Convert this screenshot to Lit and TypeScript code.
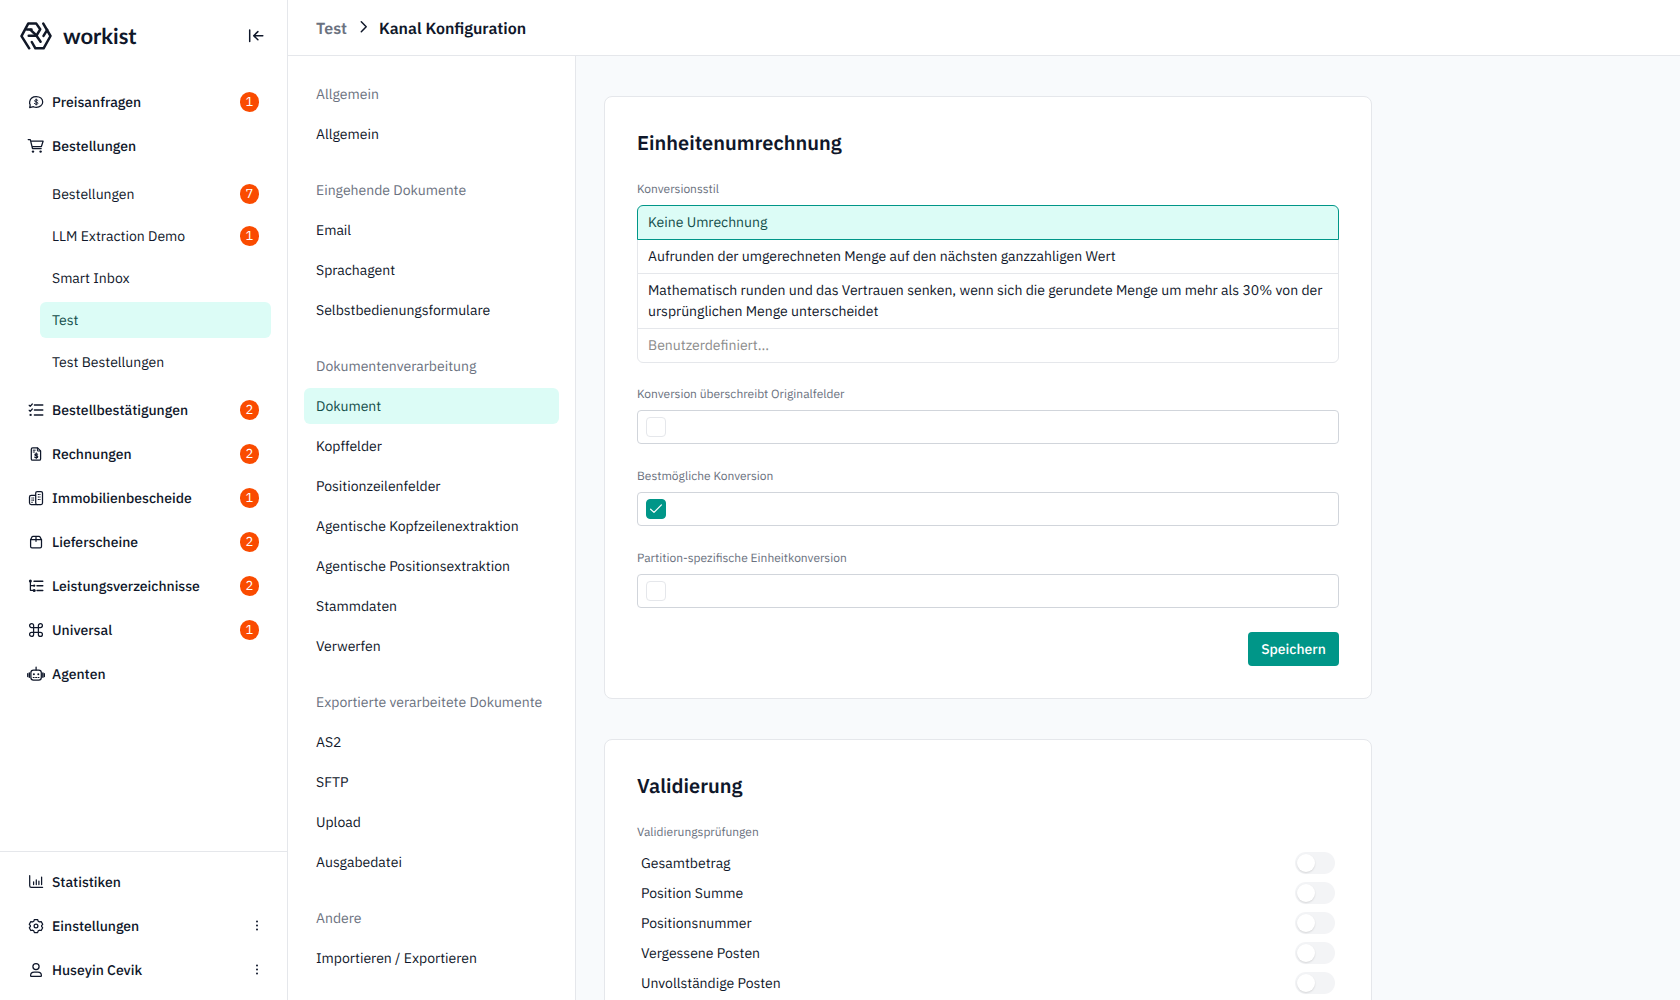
import { LitElement, html, css, svg, nothing } from "lit";
import { customElement, property, state } from "lit/decorators.js";
import { classMap } from "lit/directives/class-map.js";

/* ---------- icons (18 x 18 grid) ---------- */

const iconShapes = {
  quote: svg`
    <path d="M2.700 14.600 3.200 11.900A5.600 5 0 0 1 2.700 8.600C3.200 5.400 5.800 3.500 9.200 3.500c3.700 0 6.500 2.200 6.500 5.400s-2.800 5.400-6.300 5.400c-1 0-2-.2-2.900-.6z"/>
    <path d="M10.900 7.500c-.4-.5-1-.7-1.700-.7-.9 0-1.600.4-1.600 1.100 0 1.500 3.400.7 3.400 2.300 0 .7-.8 1.100-1.700 1.100-.8 0-1.500-.3-1.900-.8M9.200 6v6" stroke-width="1"/>`,
  cart: svg`
    <path d="M1.200 2.600h2.100l2.200 8.900h8.700M3.700 4.200h12.400l-1.700 5.300H5"/>
    <circle class="solid" cx="6" cy="14.600" r="1.200"/><circle class="solid" cx="13.600" cy="14.600" r="1.200"/>`,
  checks: svg`
    <path d="M7.400 4h8.400M7.400 9h8.400M7.400 14h8.400" stroke-width="1.400"/>
    <path d="m2.200 4.300 1 1L5.300 3M2.200 9.300l1 1L5.300 8"/>
    <rect class="solid" x="2.600" y="12.900" width="2" height="2"/>`,
  invoice: svg`
    <path d="M5.600 2.900h5l3 3v8c0 .8-.5 1.300-1.300 1.300H5.600c-.8 0-1.300-.5-1.300-1.300V4.200c0-.8.5-1.300 1.300-1.300z"/>
    <path d="M10.400 3v3h3M6.200 5.200h2M6.200 7h1.300" stroke-width="1"/>
    <path d="M10.700 9.200c-.4-.3-.9-.5-1.500-.5-.8 0-1.400.4-1.400 1 0 1.300 3 .6 3 2 0 .6-.7 1-1.500 1-.7 0-1.300-.2-1.700-.6M9.200 7.800v5.800" stroke-width="1.100"/>`,
  buildings: svg`
    <rect x="8.700" y="2.500" width="6.800" height="13" rx="1.500"/>
    <path d="M8.500 6.300H4.200c-1 0-1.700.7-1.700 1.700v5.700c0 1 .7 1.800 1.700 1.800h6"/>
    <path d="M11.400 5.500h.01M12.900 5.500h.01M11.400 8h.01M12.900 8h.01M11.400 10.500h.01M12.900 10.500h.01M5 9h.01M6.500 9h.01M5 11.200h.01M6.500 11.200h.01M5 13.300h.01" stroke-width="1.200" stroke-linecap="square"/>`,
  parcel: svg`
    <path d="M3.600 6.700h10.900v6.800c0 .8-.6 1.400-1.400 1.400H5c-.8 0-1.400-.6-1.400-1.400z"/>
    <path d="M3.600 6.700 5 3.900c.2-.4.600-.6 1-.6h6c.5 0 .8.200 1 .6l1.500 2.800M9 3.300v5"/>`,
  tree: svg`
    <path d="M3.400 4v9.300h4.200M3.400 8.600h4.200"/>
    <path d="M7 4.200h8.800M10 8.800h5.800M10 13.500h5.800" stroke-width="1.400"/>
    <circle class="solid" cx="3.400" cy="3.900" r="1.500"/><circle class="solid" cx="7.200" cy="8.700" r="1.100"/><circle class="solid" cx="7.200" cy="13.400" r="1.500"/>`,
  command: svg`
    <path d="M6.600 6.600h4.800v4.800H6.600zM6.600 6.600H4.600a2 2 0 1 1 2-2zM11.400 6.600v-2a2 2 0 1 1 2 2zM11.400 11.400h2a2 2 0 1 1-2 2zM6.600 11.400v2a2 2 0 1 1-2-2z"/>`,
  robot: svg`
    <rect x="3.900" y="5" width="10.400" height="10.200" rx="2.600"/>
    <path d="M9.100 2v3M.7 8.700v2.800M17.400 8.700v2.800"/>
    <path d="M2.300 8v4.200M15.900 8v4.200" stroke-width="1.500"/>
    <circle class="solid" cx="6.900" cy="9.300" r="1"/><circle class="solid" cx="11.300" cy="9.300" r="1"/>
    <path d="M6.200 12.500h1M8.600 12.500h1M11 12.500h1" stroke-width="1"/>`,
  chart: svg`
    <path d="M2.700 2.700v10c0 1 .7 1.600 1.600 1.600h11.300M6.600 8.800v2.700M9.300 6.800v4.700M11.900 8v3.500M14.600 4v7.500"/>`,
  gear: svg`
    <path d="M7.400 2.500h3.200l.6 1.700 1.200.7 1.800-.3 1.500 2.700-1.100 1.400v.7l1.100 1.400-1.500 2.700-1.800-.3-1.200.7-.6 1.700H7.400l-.6-1.700-1.200-.7-1.800.3-1.500-2.700 1.100-1.400v-.7L2.300 7.300l1.500-2.700 1.800.3 1.200-.7z"/>
    <circle cx="9" cy="9" r="1.900"/>`,
  user: svg`
    <circle cx="9" cy="5.600" r="3.100"/>
    <path d="M3.600 14.700c0-2.200 1.600-3.500 3.600-3.500h3.600c2 0 3.600 1.300 3.600 3.500 0 .4-.2.600-.6.600H4.200c-.4 0-.6-.2-.6-.6z"/>`,
  collapse: svg`<path d="M2.700 3v11.400M15.800 8.700H7M10.900 4.600 6.700 8.700l4.200 4.100" stroke-width="1.500"/>`,
  chevron: svg`<path d="m6.300 3.700 4.900 5-4.900 5" stroke-width="1.500"/>`,
  more: svg`
    <circle class="solid" cx="9" cy="4.400" r="1"/><circle class="solid" cx="9" cy="8.500" r="1"/><circle class="solid" cx="9" cy="12.600" r="1"/>`,
};

type IconName = keyof typeof iconShapes;

@customElement("ui-icon")
export class UiIcon extends LitElement {
  static styles = css`
    :host { display: block; flex: none; width: 18px; height: 18px; }
    svg { display: block; fill: none; stroke: currentColor; stroke-width: 1.25; stroke-linecap: round; stroke-linejoin: round; }
    .solid { fill: currentColor; stroke: none; }
  `;
  @property() name: IconName = "user";
  render() {
    return html`<svg width="18" height="18" viewBox="0 0 18 18">${iconShapes[this.name]}</svg>`;
  }
}

/* ---------- sidebar ---------- */

interface NavEntry {
  label: string;
  icon: IconName;
  count?: number;
  menu?: boolean;
  children?: { label: string; count?: number; active?: boolean }[];
}

const mainNav: NavEntry[] = [
  { label: "Preisanfragen", icon: "quote", count: 1 },
  {
    label: "Bestellungen",
    icon: "cart",
    children: [
      { label: "Bestellungen", count: 7 },
      { label: "LLM Extraction Demo", count: 1 },
      { label: "Smart Inbox" },
      { label: "Test", active: true },
      { label: "Test Bestellungen" },
    ],
  },
  { label: "Bestellbestätigungen", icon: "checks", count: 2 },
  { label: "Rechnungen", icon: "invoice", count: 2 },
  { label: "Immobilienbescheide", icon: "buildings", count: 1 },
  { label: "Lieferscheine", icon: "parcel", count: 2 },
  { label: "Leistungsverzeichnisse", icon: "tree", count: 2 },
  { label: "Universal", icon: "command", count: 1 },
  { label: "Agenten", icon: "robot" },
];

const footerNav: NavEntry[] = [
  { label: "Statistiken", icon: "chart" },
  { label: "Einstellungen", icon: "gear", menu: true },
  { label: "Huseyin Cevik", icon: "user", menu: true },
];

@customElement("side-bar")
export class SideBar extends LitElement {
  static styles = css`
    :host { display: flex; flex-direction: column; box-sizing: border-box; width: 288px; height: 100%; background: #fff; border-right: 1px solid #e5e7eb; color: #0f172a; }
    .brand { display: flex; align-items: center; height: 72px; padding: 0 22px 0 20px; box-sizing: border-box; }
    .mark { display: block; width: 32px; height: 28px; fill: none; stroke: #111827; stroke-width: 2.5; stroke-linecap: round; stroke-linejoin: round; }
    .word { margin-left: 11px; font: 700 22px/28px Lato, "Noto Sans", sans-serif; }
    .toggle { margin-left: auto; }
    nav { display: flex; flex-direction: column; gap: 8px; }
    .top { flex: 1; padding-top: 12px; }
    .bottom { border-top: 1px solid #e5e7eb; padding: 12px 0; }
    .row { display: flex; align-items: center; height: 36px; padding: 0 28px 0 27px; }
    .text { margin-left: 7px; font-weight: 500; }
    .badge { display: flex; align-items: center; justify-content: center; margin-left: auto; width: 19px; height: 20px; border-radius: 10px; background: #fa4b00; color: #fff; font-size: 13px; line-height: 20px; }
    .menu { margin-left: auto; margin-right: -7px; }
    .sub { display: flex; flex-direction: column; gap: 6px; padding: 4px 16px 4px 40px; }
    .child { display: flex; align-items: center; height: 36px; padding: 0 12px; border-radius: 6px; }
    .child.active { background: #dcfcf6; color: #134e4a; }
  `;

  private entry(e: NavEntry) {
    return html`
      <div class="row">
        <ui-icon name=${e.icon}></ui-icon>
        <span class="text">${e.label}</span>
        ${e.count ? html`<span class="badge">${e.count}</span>` : nothing}
        ${e.menu ? html`<ui-icon class="menu" name="more"></ui-icon>` : nothing}
      </div>
      ${e.children
        ? html`<div class="sub">
            ${e.children.map(
              (c) => html`<div class=${classMap({ child: true, active: !!c.active })}>
                ${c.label}${c.count ? html`<span class="badge">${c.count}</span>` : nothing}
              </div>`,
            )}
          </div>`
        : nothing}
    `;
  }

  render() {
    return html`
      <div class="brand">
        <svg class="mark" viewBox="0 0 32 28">
          <path d="M9.200 26.300 1.500 14.200 8.200 1.600H16.300L20.200 7.300 16.500 13.500 10.500 7.800" />
          <path d="M7 7.600H11.500M8.700 13.800H16.500L20.600 19.800" />
          <path d="M11.800 20 15.400 26.300H23.600L30.500 14 23.300 1.600" />
          <path d="M27.200 7.900 23.500 13.900" />
        </svg>
        <span class="word">workist</span>
        <ui-icon class="toggle" name="collapse"></ui-icon>
      </div>
      <nav class="top">${mainNav.map((e) => this.entry(e))}</nav>
      <nav class="bottom">${footerNav.map((e) => this.entry(e))}</nav>
    `;
  }
}

/* ---------- settings navigation ---------- */

const settingsNav = [
  { title: "Allgemein", items: ["Allgemein"] },
  { title: "Eingehende Dokumente", items: ["Email", "Sprachagent", "Selbstbedienungsformulare"] },
  {
    title: "Dokumentenverarbeitung",
    items: [
      "Dokument",
      "Kopffelder",
      "Positionzeilenfelder",
      "Agentische Kopfzeilenextraktion",
      "Agentische Positionsextraktion",
      "Stammdaten",
      "Verwerfen",
    ],
  },
  { title: "Exportierte verarbeitete Dokumente", items: ["AS2", "SFTP", "Upload", "Ausgabedatei"] },
  { title: "Andere", items: ["Importieren / Exportieren"] },
];

@customElement("settings-nav")
export class SettingsNav extends LitElement {
  static styles = css`
    :host { display: flex; flex-direction: column; gap: 20px; box-sizing: border-box; width: 288px; flex: none; padding: 20px 16px; background: #fff; border-right: 1px solid #e5e7eb; }
    section { display: flex; flex-direction: column; gap: 4px; }
    .title, .item { height: 36px; line-height: 36px; padding: 0 12px; white-space: nowrap; border-radius: 6px; }
    .title { color: #6b7280; }
    .item.active { background: #dcfcf6; color: #134e4a; }
  `;
  @state() private current = "Dokument";
  render() {
    return settingsNav.map(
      (g) => html`<section>
        <div class="title">${g.title}</div>
        ${g.items.map(
          (i) => html`<div
            class=${classMap({ item: true, active: i === this.current })}
            @click=${() => (this.current = i)}
          >${i}</div>`,
        )}
      </section>`,
    );
  }
}

/* ---------- form pieces ---------- */

@customElement("check-field")
export class CheckField extends LitElement {
  static styles = css`
    :host { display: block; }
    .label { padding-top: 1px; font-size: 12px; line-height: 18px; color: #6b7280; }
    .field { display: flex; align-items: center; box-sizing: border-box; height: 34px; margin-top: 6px; padding: 0 8px; border: 1px solid #d1d5db; border-radius: 4px; background: #fff; }
    .box { display: flex; align-items: center; justify-content: center; box-sizing: border-box; width: 20px; height: 20px; border: 1px solid #e5e7eb; border-radius: 4px; }
    .box.on { background: #009688; border-color: #009688; }
    .tick { display: block; fill: none; stroke: #fff; stroke-width: 1.2; stroke-linecap: round; stroke-linejoin: round; }
  `;
  @property() label = "";
  @property({ type: Boolean }) checked = false;
  render() {
    return html`
      <div class="label">${this.label}</div>
      <div class="field">
        <div class=${classMap({ box: true, on: this.checked })}>
          ${this.checked
            ? html`<svg class="tick" width="14" height="14" viewBox="0 0 14 14"><path d="m1.600 7.200 3.400 3.200 7.400-7.500" /></svg>`
            : nothing}
        </div>
      </div>
    `;
  }
}

@customElement("toggle-row")
export class ToggleRow extends LitElement {
  static styles = css`
    :host { display: flex; align-items: center; justify-content: space-between; height: 30px; padding: 0 4px; }
    .track { box-sizing: border-box; width: 40px; height: 22px; padding: 2px; border-radius: 11px; background: #f3f4f6; }
    .knob { width: 18px; height: 18px; border-radius: 50%; background: #fff; box-shadow: 0 1px 2px rgba(0, 0, 0, 0.12); }
  `;
  @property() label = "";
  render() {
    return html`<span>${this.label}</span><div class="track"><div class="knob"></div></div>`;
  }
}

/* ---------- page ---------- */

const conversionStyles = [
  "Keine Umrechnung",
  "Aufrunden der umgerechneten Menge auf den nächsten ganzzahligen Wert",
  "Mathematisch runden und das Vertrauen senken, wenn sich die gerundete Menge um mehr als 30% von der ursprünglichen Menge unterscheidet",
  "Benutzerdefiniert...",
];

const validations = ["Gesamtbetrag", "Position Summe", "Positionsnummer", "Vergessene Posten", "Unvollständige Posten"];

@customElement("app-root")
export class AppRoot extends LitElement {
  static styles = css`
    :host { display: flex; width: 100%; height: 100vh; overflow: hidden; background: #f9fafb; color: #0f172a; font: 400 14px/21px "IBM Plex Sans", Roboto, "Noto Sans", sans-serif; text-rendering: geometricPrecision; }
    side-bar { flex: none; }
    .page { display: flex; flex-direction: column; flex: 1; min-width: 0; }
    .header { display: flex; align-items: center; box-sizing: border-box; height: 56px; flex: none; padding: 2px 28px 0; background: #fff; border-bottom: 1px solid #e5e7eb; font-size: 16px; line-height: 24px; font-weight: 600; }
    .parent { color: #6b7280; }
    .chevron { margin: 0 6px 4px 8px; }
    .body { display: flex; flex: 1; min-height: 0; }
    .content { flex: 1; min-width: 0; display: flex; flex-direction: column; gap: 40px; padding: 40px 28px; overflow: hidden; background: #f8fafc; }
    .card { box-sizing: border-box; flex: none; width: 768px; padding: 32px; background: #fff; border: 1px solid #e5e7eb; border-radius: 8px; }
    h2 { margin: 0; font-size: 20px; line-height: 28px; font-weight: 600; }
    .label { margin-top: 24px; font-size: 12px; line-height: 18px; color: #6b7280; }
    .options { display: flex; flex-direction: column; margin: 6px 0 22px; }
    .option { padding: 6px 10px; border: 1px solid #e5e7eb; }
    .option + .option { margin-top: -1px; }
    .option:first-child { border-radius: 6px 6px 0 0; }
    .option:last-child { border-radius: 0 0 6px 6px; color: #8c8c8c; }
    .option.selected { z-index: 1; border-color: #009688; background: #dcfcf6; color: #134e4a; }
    .fields { display: flex; flex-direction: column; gap: 23px; }
    .actions { display: flex; justify-content: flex-end; margin-top: 24px; }
    .save { width: 91px; height: 34px; padding: 0; border: 0; border-radius: 4px; background: #009688; color: #fff; font: inherit; font-weight: 500; text-rendering: inherit; }
    .toggles { margin-top: 6px; }
  `;
  @state() private selected = 0;
  render() {
    return html`
      <side-bar></side-bar>
      <div class="page">
        <header class="header">
          <span class="parent">Test</span>
          <ui-icon class="chevron" name="chevron"></ui-icon>
          <span>Kanal Konfiguration</span>
        </header>
        <div class="body">
          <settings-nav></settings-nav>
          <main class="content">
            <section class="card">
              <h2>Einheitenumrechnung</h2>
              <div class="label">Konversionsstil</div>
              <div class="options">
                ${conversionStyles.map(
                  (o, i) => html`<div
                    class=${classMap({ option: true, selected: i === this.selected })}
                    @click=${() => (this.selected = i)}
                  >${o}</div>`,
                )}
              </div>
              <div class="fields">
                <check-field label="Konversion überschreibt Originalfelder"></check-field>
                <check-field label="Bestmögliche Konversion" checked></check-field>
                <check-field label="Partition-spezifische Einheitkonversion"></check-field>
              </div>
              <div class="actions"><button class="save">Speichern</button></div>
            </section>
            <section class="card">
              <h2>Validierung</h2>
              <div class="label">Validierungsprüfungen</div>
              <div class="toggles">${validations.map((v) => html`<toggle-row label=${v}></toggle-row>`)}</div>
            </section>
          </main>
        </div>
      </div>
    `;
  }
}
